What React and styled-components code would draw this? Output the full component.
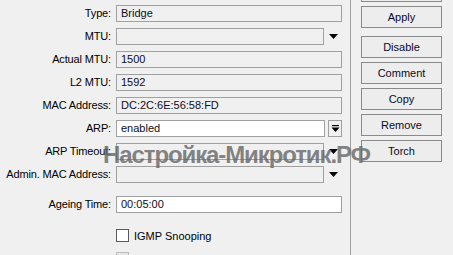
import styled, { createGlobalStyle } from "styled-components";

const GlobalStyle = createGlobalStyle`
  html, body {
    margin: 0;
    padding: 0;
    background: #f0f0f0;
  }
  body {
    font-family: "Liberation Sans", Arial, sans-serif;
    font-size: 11px;
    color: #000;
  }
`;

const Window = styled.div`
  position: relative;
  width: 453px;
  height: 255px;
  overflow: hidden;
  display: flex;
  background: #f0f0f0;
`;

const Form = styled.div`
  width: 350px;
  padding-top: 5px;
  display: flex;
  flex-direction: column;
`;

const Row = styled.div`
  display: grid;
  grid-template-columns: 111px 226px;
  column-gap: 5px;
  height: 17px;
  margin-bottom: 6px;
`;

const Label = styled.div`
  text-align: right;
  line-height: 17px;
  white-space: nowrap;
  letter-spacing: -0.15px;
`;

const FieldWrap = styled.div`
  display: flex;
  align-items: center;
`;

const Field = styled.div`
  box-sizing: border-box;
  width: ${(p) => (p.$short ? "209px" : "226px")};
  height: 17px;
  border: 1px solid #a0a0a0;
  background: ${(p) => (p.$editable ? "#fff" : "#f0f0f0")};
  padding-left: 4px;
  line-height: 15px;
  color: #0c0c1e;
  white-space: nowrap;
`;

const ArrowSlot = styled.div`
  width: 17px;
  height: 17px;
  display: flex;
  align-items: center;
  justify-content: center;
  padding-left: 1px;
`;

const DropButton = styled.div`
  box-sizing: border-box;
  margin-left: 3px;
  width: 14px;
  height: 17px;
  border: 1px solid #a0a0a0;
  background: #f0f0f0;
  display: flex;
  align-items: center;
  justify-content: center;
`;

const Separator = styled.div`
  margin: ${(p) => p.$top}px 0 6px 10px;
  width: 333px;
  height: 1px;
  background: #a0a0a0;
`;

const CheckRow = styled.div`
  display: flex;
  align-items: center;
  gap: 5px;
  padding-left: 116px;
  height: 13px;
  margin-top: ${(p) => p.$top}px;
`;

const Box = styled.div`
  box-sizing: border-box;
  width: 13px;
  height: 13px;
  border: 1px solid ${(p) => (p.$disabled ? "#bcbcbc" : "#5a5a5a")};
  background: ${(p) => (p.$disabled ? "#e6e6e6" : "#fff")};
`;

const Side = styled.div`
  width: 92px;
  border-left: 1px solid #a0a0a0;
  padding-left: 10px;
  margin-top: -20px;
  display: flex;
  flex-direction: column;
  gap: 4px;
`;

const Button = styled.div`
  box-sizing: border-box;
  width: 81px;
  height: 22px;
  border: 1px solid #8a8a8a;
  background: #ededed;
  display: flex;
  align-items: center;
  justify-content: center;
  color: #0a0a28;
  margin-top: ${(p) => (p.$spaced ? "4px" : "0")};
`;

const Watermark = styled.div`
  position: absolute;
  left: 103px;
  top: 143px;
  font-family: "Liberation Sans", Arial, sans-serif;
  font-weight: bold;
  font-size: 24px;
  line-height: 24px;
  letter-spacing: -1.1px;
  color: rgba(100, 100, 100, 0.8);
  white-space: nowrap;
  pointer-events: none;
`;

const Arrow = () => (
  <svg width="9" height="6" viewBox="0 0 9 6">
    <path d="M0 0 H9 L4.5 5 Z" fill="#000" />
  </svg>
);

const BarArrow = () => (
  <svg width="9" height="9" viewBox="0 0 9 9">
    <rect x="1" y="1" width="7" height="1.2" fill="#000" />
    <path d="M0.5 3.5 H8.5 L4.5 8 Z" fill="#000" />
  </svg>
);

const fields = [
  { label: "Type:", value: "Bridge" },
  { label: "MTU:", value: "", arrow: true },
  { label: "Actual MTU:", value: "1500" },
  { label: "L2 MTU:", value: "1592" },
  { label: "MAC Address:", value: "DC:2C:6E:56:58:FD" },
  { label: "ARP:", value: "enabled", editable: true, drop: true },
  { label: "ARP Timeout:", value: "", arrow: true },
  { label: "Admin. MAC Address:", value: "", arrow: true },
];

// the top button is scrolled off; only its lower edge shows
const buttons = ["", "Apply", "Disable", "Comment", "Copy", "Remove", "Torch"];

export default function App() {
  return (
    <>
      <GlobalStyle />
      <Window>
        <Form>
          {fields.map((f) => (
            <Row key={f.label}>
              <Label>{f.label}</Label>
              <FieldWrap>
                <Field $short={f.arrow || f.drop} $editable={f.editable}>
                  {f.value}
                </Field>
                {f.arrow && (
                  <ArrowSlot>
                    <Arrow />
                  </ArrowSlot>
                )}
                {f.drop && (
                  <DropButton>
                    <BarArrow />
                  </DropButton>
                )}
              </FieldWrap>
            </Row>
          ))}
          <Separator $top={1} />
          <Row>
            <Label>Ageing Time:</Label>
            <FieldWrap>
              <Field $editable>00:05:00</Field>
            </FieldWrap>
          </Row>
          <Separator $top={1} />
          <CheckRow $top={3}>
            <Box />
            <span>IGMP Snooping</span>
          </CheckRow>
          <CheckRow $top={10}>
            <Box $disabled />
          </CheckRow>
        </Form>
        <Side>
          {buttons.map((b, i) => (
            <Button key={i} $spaced={b === "Disable"}>
              {b}
            </Button>
          ))}
        </Side>
        <Watermark>Настройка-Микротик.РФ</Watermark>
      </Window>
    </>
  );
}
